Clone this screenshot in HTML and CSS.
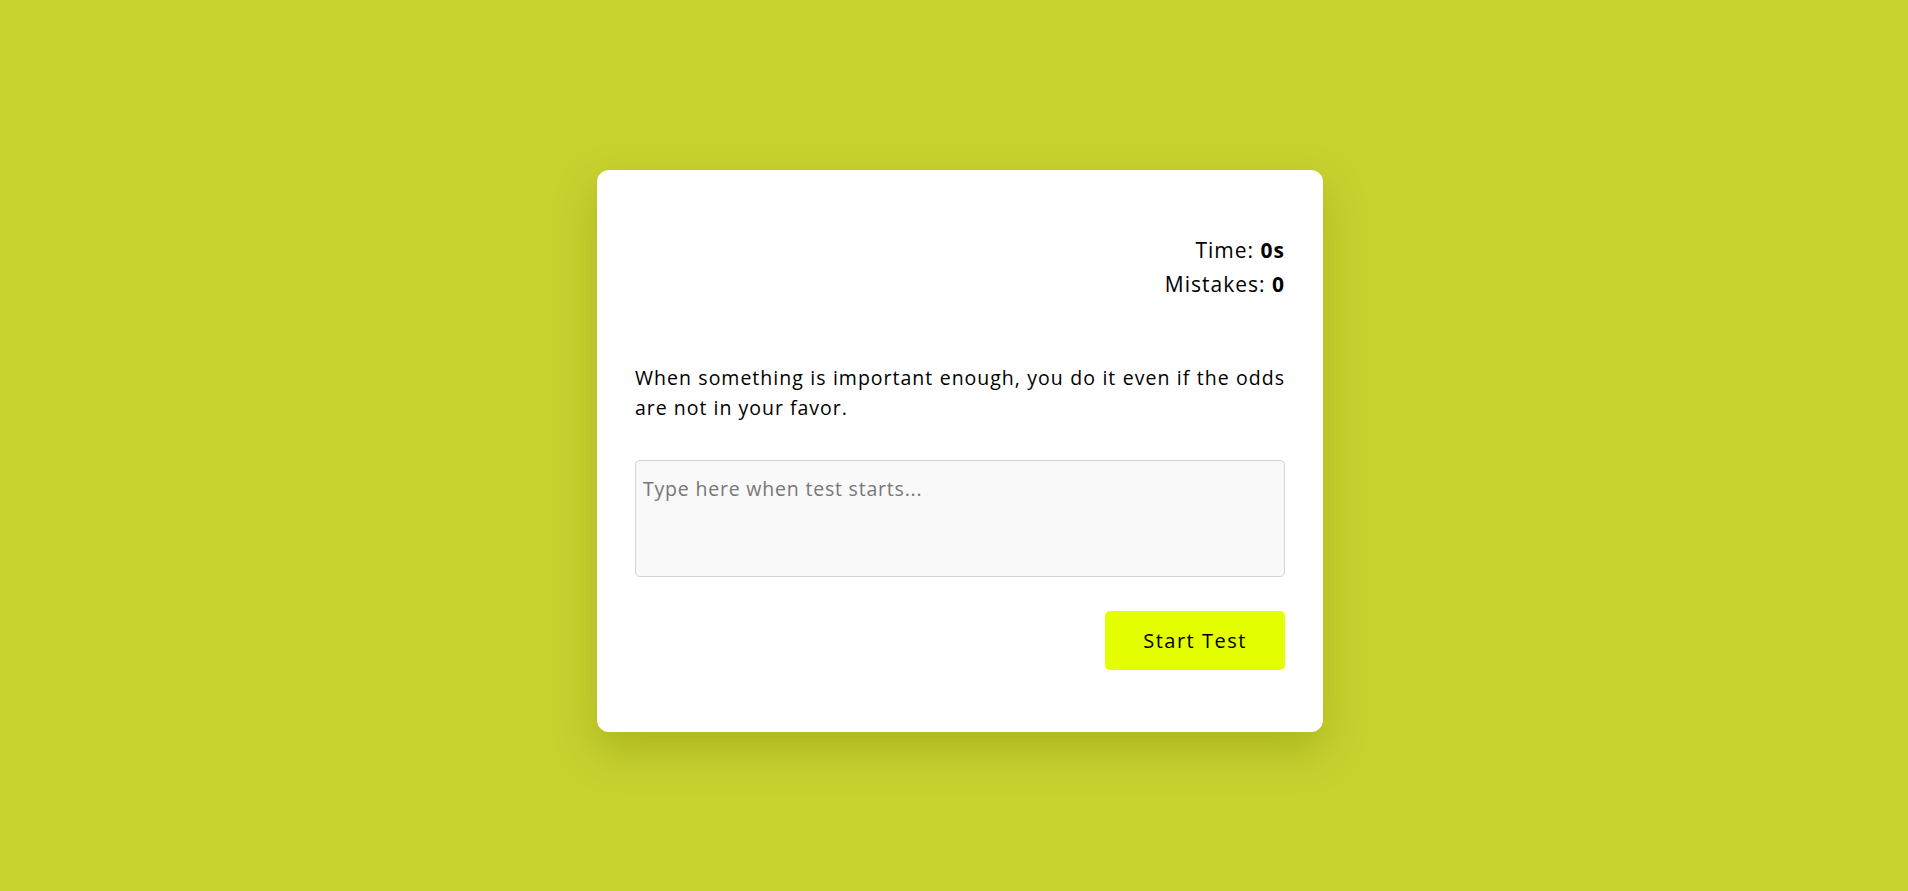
FILE: index.html
```html
<!DOCTYPE html>
<html lang="en">
<head>
<meta charset="utf-8">
<title>Typing Test</title>
<link rel="stylesheet" href="styles.css">
</head>
<body>
<main class="page">
  <section class="card">
    <div class="stats">
      <p class="stat">Time: <strong>0s</strong></p>
      <p class="stat">Mistakes: <strong>0</strong></p>
    </div>
    <p class="quote">When something is important enough, you do it even if the odds are not in your favor.</p>
    <textarea class="input" placeholder="Type here when test starts..."></textarea>
    <div class="actions">
      <button class="btn" type="button">Start Test</button>
    </div>
  </section>
</main>
</body>
</html>
```

FILE: styles.css
```css
* { box-sizing: border-box; }
html, body { margin: 0; padding: 0; }
body {
  background: #c7d22f;
  font-family: "Open Sans", "Noto Sans", sans-serif;
  color: #000;
}
.page {
  min-height: 100vh;
  display: flex;
  align-items: center;
  justify-content: center;
  padding: 11px 0 0 12px;
}
.card {
  width: 726px;
  background: #fff;
  border-radius: 12px;
  padding: 38px 38px 62px;
  box-shadow: 0 18px 40px rgba(120, 130, 0, 0.35);
  display: flex;
  flex-direction: column;
}
.stats {
  margin-top: 25px;
  text-align: right;
}
.stat {
  margin: 0;
  font-size: 21px;
  line-height: 34px;
  letter-spacing: 1px;
}
.stat strong { font-weight: 700; }
.quote {
  margin: 62px 0 0;
  font-size: 19.5px;
  line-height: 30px;
  letter-spacing: 1px;
  text-align: justify;
}
.input {
  margin-top: 37px;
  height: 117px;
  width: 100%;
  resize: none;
  background: #f9f9f9;
  border: 1px solid #d4d4d4;
  border-radius: 5px;
  padding: 16px 7px 12px;
  font-family: inherit;
  font-size: 19.5px;
  line-height: 24px;
  letter-spacing: 0.8px;
  color: #000;
}
.input::placeholder { color: #777; }
.actions {
  margin-top: 34px;
  display: flex;
  justify-content: flex-end;
}
.btn {
  width: 180px;
  height: 59px;
  border: none;
  border-radius: 5px;
  background: #e4ff00;
  font-family: inherit;
  font-size: 20px;
  letter-spacing: 1.5px;
  color: #000;
  cursor: pointer;
}
```
